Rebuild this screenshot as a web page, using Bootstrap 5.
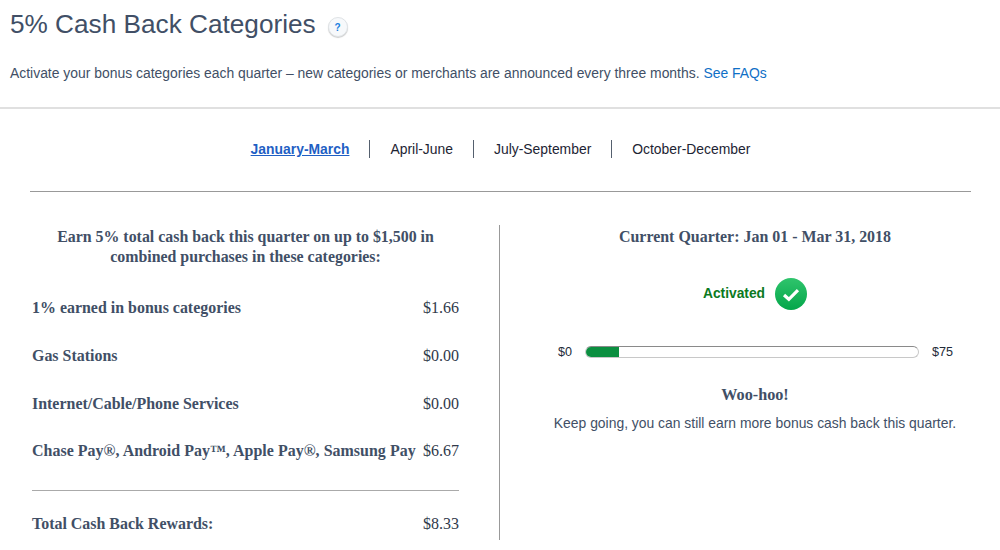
<!DOCTYPE html>
<html lang="en">
<head>
<meta charset="utf-8">
<title>5% Cash Back Categories</title>
<link href="https://cdn.jsdelivr.net/npm/bootstrap@5.3.0/dist/css/bootstrap.min.css" rel="stylesheet">
<style>
html,body{height:550px;overflow:hidden;background:#fff}
body{font-family:"Liberation Sans",Arial,sans-serif;color:#414f66}
.page-head{height:109px;border-bottom:2px solid #e0e0e0;padding:7px 10px 0}
.page-title{font-size:26.2px;line-height:34px;font-weight:400;color:#414f66;margin:0}
.help-dot{width:20px;height:20px;border-radius:50%;background:#f7f9fb;border:1px solid #dfe3e6;box-shadow:0 1px 1px #ccc;color:#1a7fe0;font-size:10px;font-weight:700;margin-left:12px;margin-top:10px}
.page-sub{font-size:13.92px;line-height:20px;margin:22px 0 0;color:#414f66}
.page-sub a{color:#0f6fc6;text-decoration:none}
.quarter-tabs{height:83px;margin:0 29px 0 30px;border-bottom:1px solid #999;padding-bottom:2px}
.quarter-tabs a{font-size:13.9px;line-height:18px;color:#1d2433;text-decoration:none;padding:0 20px;border-left:1px solid #55606e}
.quarter-tabs a:first-child{border-left:0}
.quarter-tabs a.on{color:#1f5fc4;font-weight:700;text-decoration:underline}
.panes{margin:33px 0 0 32px}
.pane-left{width:468px;padding:2px 40px 0 0;height:315px;border-right:1px solid #999}
.pane-right{width:490px;padding:2px 0 0 20px}
.serif-b{font-family:"Liberation Serif","Times New Roman",serif;font-weight:700;color:#414f66}
.lead-q{font-size:15.9px;line-height:20px;margin:0 0 31px;text-align:center}
.lead-q.one-line{margin-bottom:31px;font-size:15.95px}
.lead-q.cheer{margin:23px 0 8px;font-size:16.2px}
.cat-row{font-size:15.95px;line-height:20px;height:47.8px;font-family:"Liberation Serif","Times New Roman",serif}
.cat-row .amt{color:#30394a;font-weight:400;font-size:16px}
.cat-wide{letter-spacing:.03px}
.sum-rule{border-top:1px solid #aaa;margin:.6px 0 23px}
.activated{color:#0b7a1f;font-size:13.8px;font-weight:700}
.ok-dot{width:32px;height:32px;border-radius:50%;background:linear-gradient(#2fc46c,#04a64a);margin-left:10px}
.meter-row{margin:33px 37px 0 38px}
.meter-label{font-size:12.6px;color:#222b38}
.meter{flex:1 1 auto;height:12px;border:1px solid #c8c8c8;border-top-color:#8a8a8a;border-radius:6px;overflow:hidden;background:#fff;margin:0 13px}
.meter-fill{height:100%;background:#0b8f40}
.msg{font-size:13.9px;line-height:20px;margin:0;color:#414f66}
</style>
</head>
<body>
<header class="page-head">
  <div class="d-flex align-items-start">
    <h1 class="page-title">5% Cash Back Categories</h1>
    <span class="help-dot d-flex align-items-center justify-content-center">?</span>
  </div>
  <p class="page-sub">Activate your bonus categories each quarter – new categories or merchants are announced every three months. <a href="#">See FAQs</a></p>
</header>
<nav class="quarter-tabs d-flex justify-content-center align-items-center">
  <a class="on" href="#">January-March</a>
  <a href="#">April-June</a>
  <a href="#">July-September</a>
  <a href="#">October-December</a>
</nav>
<main class="panes d-flex">
  <section class="pane-left">
    <p class="lead-q serif-b">Earn 5% total cash back this quarter on up to $1,500 in<br>combined purchases in these categories:</p>
    <div class="cat-row d-flex justify-content-between"><span class="serif-b">1% earned in bonus categories</span><span class="amt">$1.66</span></div>
    <div class="cat-row d-flex justify-content-between"><span class="serif-b">Gas Stations</span><span class="amt">$0.00</span></div>
    <div class="cat-row d-flex justify-content-between"><span class="serif-b">Internet/Cable/Phone Services</span><span class="amt">$0.00</span></div>
    <div class="cat-row d-flex justify-content-between"><span class="serif-b cat-wide">Chase Pay®, Android Pay™, Apple Pay®, Samsung Pay</span><span class="amt">$6.67</span></div>
    <div class="sum-rule"></div>
    <div class="cat-row d-flex justify-content-between"><span class="serif-b">Total Cash Back Rewards:</span><span class="amt">$8.33</span></div>
  </section>
  <section class="pane-right text-center">
    <p class="lead-q one-line serif-b">Current Quarter: Jan 01 - Mar 31, 2018</p>
    <div class="d-flex justify-content-center align-items-center">
      <span class="activated">Activated</span>
      <span class="ok-dot d-flex align-items-center justify-content-center">
        <svg width="20" height="15" viewBox="0 0 18 14"><path d="M2.5 7.5 L7 11.5 L15.5 3" fill="none" stroke="#fff" stroke-width="3"/></svg>
      </span>
    </div>
    <div class="meter-row d-flex align-items-center">
      <span class="meter-label">$0</span>
      <div class="meter"><div class="meter-fill" style="width:10%"></div></div>
      <span class="meter-label">$75</span>
    </div>
    <p class="lead-q cheer serif-b">Woo-hoo!</p>
    <p class="msg">Keep going, you can still earn more bonus cash back this quarter.</p>
  </section>
</main>
<script src="https://cdn.jsdelivr.net/npm/bootstrap@5.3.0/dist/js/bootstrap.bundle.min.js"></script>
</body>
</html>
